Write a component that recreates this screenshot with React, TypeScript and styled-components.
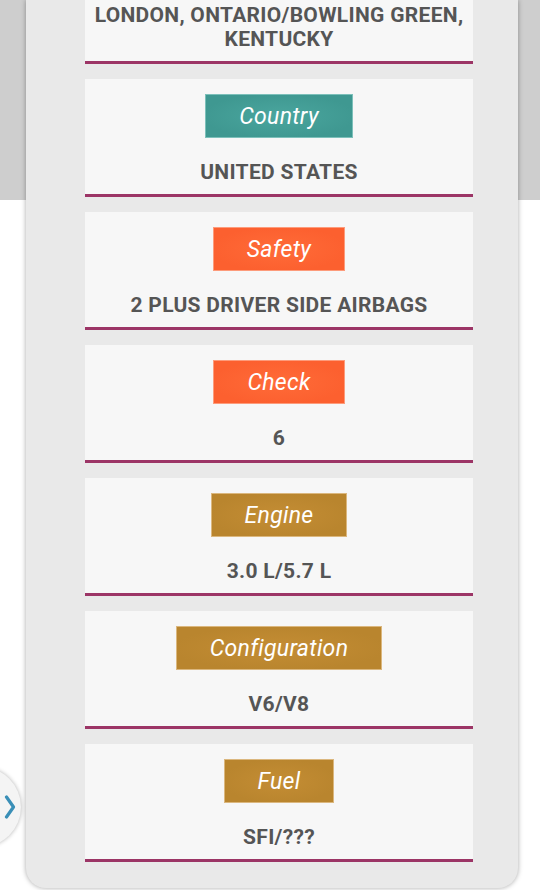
import React from "react";
import styled, { createGlobalStyle } from "styled-components";

const Global = createGlobalStyle`
  html, body {
    margin: 0;
    padding: 0;
  }
  body {
    background: linear-gradient(#cecece 0, #cecece 200px, #ffffff 200px);
    font-family: Roboto, "Liberation Sans", sans-serif;
    min-height: 890px;
    overflow: hidden;
  }
`;

const Page = styled.div`
  position: relative;
  width: 540px;
  height: 890px;
`;

const Panel = styled.div`
  position: relative;
  z-index: 1;
  margin-left: 26px;
  width: 492px;
  box-sizing: border-box;
  padding: 0 45px 26px 59px;
  background: #e9e9e9;
  border-radius: 0 0 20px 20px;
  box-shadow: 0 0 5px rgba(0, 0, 0, 0.35);
  display: flex;
  flex-direction: column;
  gap: 15px;
`;

const Card = styled.div<{ $top?: number }>`
  background: #f7f7f7;
  border-bottom: 3px solid #9c3566;
  padding: ${(p) => p.$top ?? 15}px 6px 10px;
  display: flex;
  flex-direction: column;
  align-items: center;
  text-align: center;
`;

const colors: Record<string, [string, string, string]> = {
  teal: ["#4aa69e", "#3f9891", "#7cc0ba"],
  orange: ["#ff6b38", "#fc602f", "#fd9b7b"],
  gold: ["#c48d34", "#b9852e", "#dbb77e"],
};

const Badge = styled.div<{ $tone: string }>`
  height: 42px;
  box-sizing: content-box;
  line-height: 44px;
  padding: 0 33px;
  margin-bottom: 22px;
  color: #ffffff;
  font-style: italic;
  font-size: 23px;
  letter-spacing: 0.3px;
  font-weight: 400;
  overflow: hidden;
  background: ${(p) =>
    `radial-gradient(ellipse at center, ${colors[p.$tone][0]} 0%, ${colors[p.$tone][1]} 75%)`};
  border: 1px solid ${(p) => colors[p.$tone][2]};
`;

const Value = styled.div`
  font-size: 21px;
  line-height: 24px;
  letter-spacing: 0.3px;
  font-weight: 700;
  color: #555555;
`;

const SideTab = styled.div`
  position: absolute;
  left: -59px;
  top: 767px;
  width: 80px;
  height: 80px;
  border-radius: 50%;
  background: #f4f4f4;
  box-shadow: 0 0 4px rgba(0, 0, 0, 0.3);
`;

const Chevron = styled.svg`
  position: absolute;
  left: 63px;
  top: 28px;
`;

const items: { label: string; tone: string; value: string }[] = [
  { label: "Country", tone: "teal", value: "UNITED STATES" },
  { label: "Safety", tone: "orange", value: "2 PLUS DRIVER SIDE AIRBAGS" },
  { label: "Check", tone: "orange", value: "6" },
  { label: "Engine", tone: "gold", value: "3.0 L/5.7 L" },
  { label: "Configuration", tone: "gold", value: "V6/V8" },
  { label: "Fuel", tone: "gold", value: "SFI/???" },
];

export default function App() {
  return (
    <Page>
      <Global />
      <Panel>
        <Card $top={3}>
          <Value>
            LONDON, ONTARIO/BOWLING GREEN,
            <br />
            KENTUCKY
          </Value>
        </Card>
        {items.map((it) => (
          <Card key={it.label}>
            <Badge $tone={it.tone}>{it.label}</Badge>
            <Value>{it.value}</Value>
          </Card>
        ))}
      </Panel>
      <SideTab>
        <Chevron width="12" height="24" viewBox="0 0 12 24">
          <path
            d="M2.5 2 L9.5 12 L2.5 22"
            fill="none"
            stroke="#3a8fb7"
            strokeWidth="3.2"
            strokeLinecap="round"
            strokeLinejoin="round"
          />
        </Chevron>
      </SideTab>
    </Page>
  );
}
